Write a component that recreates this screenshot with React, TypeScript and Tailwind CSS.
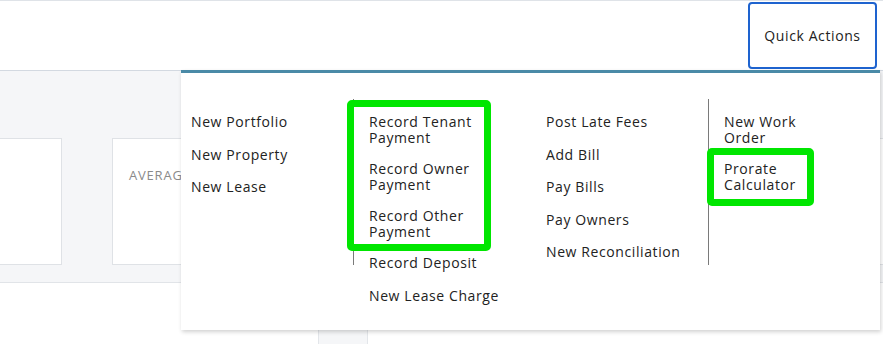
import React from "react";

const Item = ({ lines }: { lines: string[] }) => (
  <div className={lines.length > 1 ? "py-[7.5px] leading-[16px]" : "py-[8.25px] leading-[16px]"}>
    {lines.map((l, i) => (
      <div key={i} className="whitespace-nowrap">
        {l}
      </div>
    ))}
  </div>
);

const Sep = () => (
  <div className="mt-[26px] h-[166px] w-px shrink-0 bg-[#7a7a7a]" />
);

export default function App() {
  const col1 = [["New Portfolio"], ["New Property"], ["New Lease"]];
  const col2 = [
    ["Record Tenant", "Payment"],
    ["Record Owner", "Payment"],
    ["Record Other", "Payment"],
    ["Record Deposit"],
    ["New Lease Charge"],
  ];
  const col3 = [
    ["Post Late Fees"],
    ["Add Bill"],
    ["Pay Bills"],
    ["Pay Owners"],
    ["New Reconciliation"],
  ];
  const col4 = [["New Work", "Order"], ["Prorate", "Calculator"]];

  return (
    <div className="relative h-[344px] w-[883px] overflow-hidden bg-white font-['Open_Sans',sans-serif] text-[14px] tracking-[0.6px] text-[#222]">
      <header className="flex h-[71px] items-start justify-end border-t border-b border-t-[#dfe3e8] border-b-[#d3d9e1] bg-white pr-[6px] pt-px">
        <button className="h-[67px] w-[129px] rounded-[4px] border-2 border-[#1e63cf] bg-white text-[14px] tracking-[0.6px] text-[#222]">
          Quick Actions
        </button>
      </header>

      <section className="flex h-[212px] gap-[50px] border-b border-[#e1e4e8] bg-[#f5f6f8] pt-[67px]">
        <div className="h-[127px] w-[62px] shrink-0 border border-l-0 border-[#dfe2e6] bg-white" />
        <div className="h-[127px] w-[300px] shrink-0 border border-[#dfe2e6] bg-white pl-[16px] pt-[27px]">
          <div className="text-[13px] uppercase tracking-[0.8px] text-[#8a8a8a]">
            Average Rent
          </div>
        </div>
        <div className="h-[127px] flex-1 border border-r-0 border-[#dfe2e6] bg-white" />
      </section>

      <div className="flex h-[61px]">
        <div className="ml-[318px] h-full w-[50px] border-x border-[#e3e6ea] bg-[#f5f6f8]" />
      </div>

      <div className="absolute left-[181px] top-[70px] flex h-[260px] w-[699px] border-t-[3px] border-[#4a8aa7] bg-white shadow-[1px_2px_4px_rgba(0,0,0,0.18)]">
        <div className="flex w-full">
          <div className="w-[172px] shrink-0 pl-[10px] pt-[33px]">
            {col1.map((l, i) => (
              <Item key={i} lines={l} />
            ))}
          </div>
          <Sep />
          <div className="w-[176px] shrink-0 pl-[15px] pt-[33px]">
            {col2.map((l, i) => (
              <Item key={i} lines={l} />
            ))}
          </div>
          <div className="w-[178px] shrink-0 pl-[16px] pt-[33px]">
            {col3.map((l, i) => (
              <Item key={i} lines={l} />
            ))}
          </div>
          <Sep />
          <div className="flex-1 pl-[15px] pt-[33px]">
            {col4.map((l, i) => (
              <Item key={i} lines={l} />
            ))}
          </div>
        </div>
      </div>

      <div className="absolute left-[347px] top-[100px] h-[151px] w-[144px] rounded-[5px] border-[7px] border-[#00e600]" />
      <div className="absolute left-[707px] top-[148px] h-[58px] w-[107px] rounded-[5px] border-[7px] border-[#00e600]" />
    </div>
  );
}
